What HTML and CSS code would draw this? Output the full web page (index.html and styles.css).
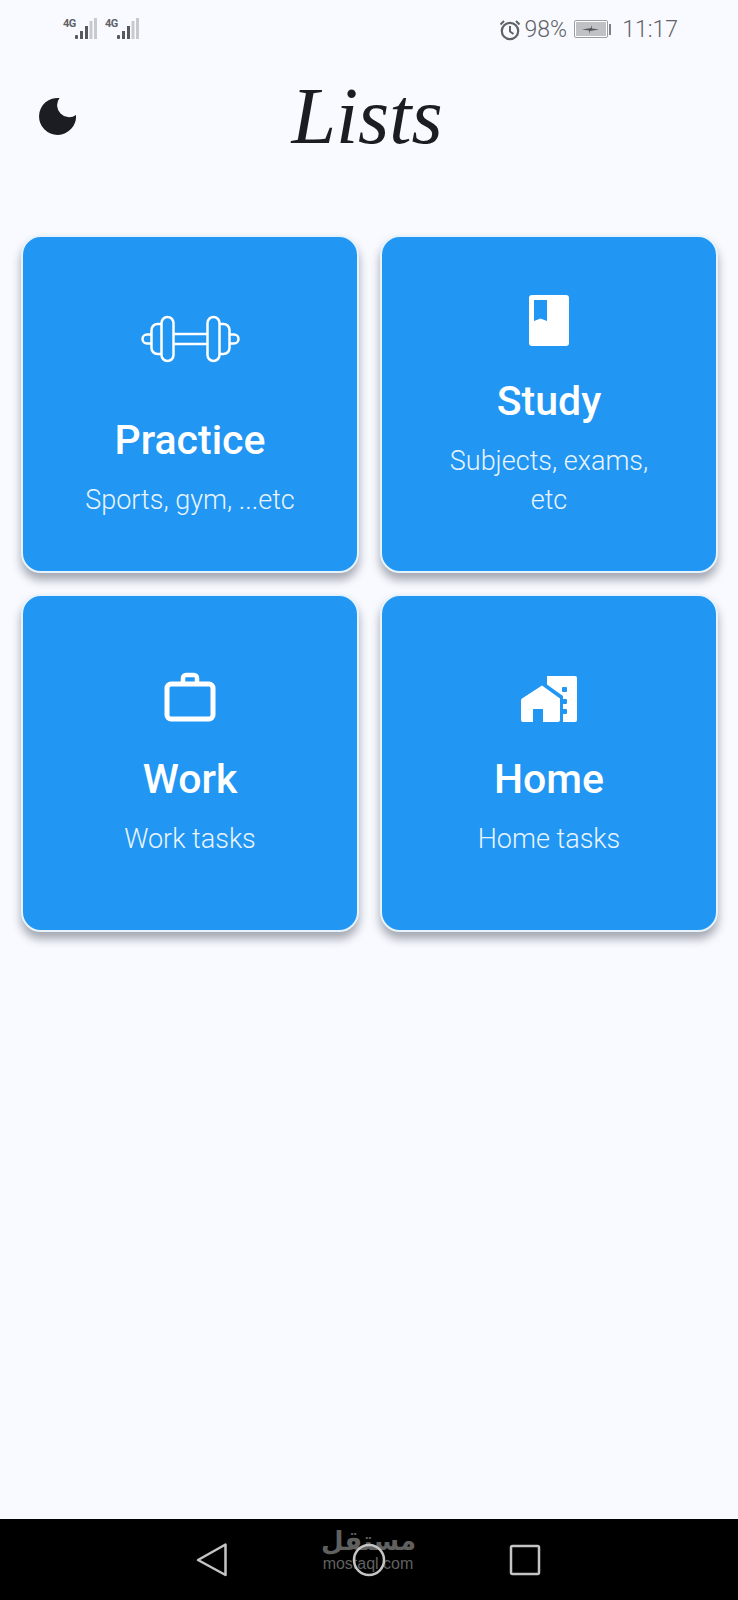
FILE: index.html
```html
<!DOCTYPE html>
<html>
<head>
<meta charset="utf-8">
<title>Lists</title>
<link rel="stylesheet" href="styles.css">
</head>
<body>
<div class="screen">

	<div class="statusBar">
		<div class="signals">
			<div class="sim">
				<span class="simLabel">4G</span>
				<svg class="bars" width="22" height="22" viewBox="0 0 22 22">
					<rect x="0" y="17" width="3" height="4" rx="1" fill="#55585c"/>
					<rect x="5" y="13" width="3" height="8" fill="#55585c"/>
					<rect x="10" y="8" width="3" height="13" fill="#55585c"/>
					<rect x="14.5" y="3" width="3" height="18" fill="#c6c9ce"/>
					<rect x="19" y="0" width="3" height="21" fill="#c6c9ce"/>
				</svg>
			</div>
			<div class="sim">
				<span class="simLabel">4G</span>
				<svg class="bars" width="22" height="22" viewBox="0 0 22 22">
					<rect x="0" y="17" width="3" height="4" rx="1" fill="#55585c"/>
					<rect x="5" y="13" width="3" height="8" fill="#55585c"/>
					<rect x="10" y="8" width="3" height="13" fill="#55585c"/>
					<rect x="14.5" y="3" width="3" height="18" fill="#c6c9ce"/>
					<rect x="19" y="0" width="3" height="21" fill="#c6c9ce"/>
				</svg>
			</div>
		</div>
		<div class="statusRight">
			<svg width="22" height="22" viewBox="0 0 22 22" fill="none" stroke="#5f6266">
				<circle cx="11" cy="12" r="8.2" stroke-width="2.2"/>
				<path d="M11 7v5.5l3.5 2.5" stroke-width="2"/>
				<path d="M1.5 5.5L5 2M20.5 5.5L17 2" stroke-width="2"/>
			</svg>
			<span class="percent">98%</span>
			<svg class="battery" width="37" height="20" viewBox="0 0 37 20">
				<rect x="0.5" y="0.5" width="33" height="17" rx="1.5" fill="#fff" stroke="#9a9da1"/>
				<rect x="2" y="2" width="30" height="14" fill="#bfc1c5"/>
				<path d="M8 9.5l9-1.500 1-3 0 3.500 7 1-9 1.500-1 3 0-3.500z" fill="#55585c"/>
				<rect x="35" y="4" width="2" height="11" fill="#7d8084"/>
			</svg>
			<span class="clock">11:17</span>
		</div>
	</div>

	<div class="header">
		<svg class="moon" width="38" height="38" viewBox="0 0 38 38">
			<path d="M20.500 1A18.500 18.500 0 1 0 37 18A12 12 0 0 1 20.500 1z" fill="#1b1d22"/>
		</svg>
		<h1 class="pageTitle">Lists</h1>
	</div>

	<div class="cardGrid">
		<div class="card">
			<svg class="cardIcon" width="100" height="96" viewBox="0 0 100 96" fill="none" stroke="#fff" stroke-width="2.500">
				<rect x="21.500" y="27" width="12" height="44" rx="6"/>
				<rect x="67.500" y="27" width="12" height="44" rx="6"/>
				<path d="M21.500 34h-4a6 6 0 0 0-6 6v18a6 6 0 0 0 6 6h4"/>
				<path d="M79.500 34h4a6 6 0 0 1 6 6v18a6 6 0 0 1-6 6h-4"/>
				<path d="M11.500 44.500h-4.500a4.500 4.500 0 0 0 0 9h4.500"/>
				<path d="M89.500 44.500h4.500a4.500 4.500 0 0 1 0 9h-4.500"/>
				<path d="M33.500 44h34M33.500 54h34"/>
			</svg>
			<div class="cardTitle">Practice</div>
			<div class="cardText">Sports, gym, ...etc</div>
		</div>
		<div class="card">
			<svg class="cardIcon" width="42" height="56" viewBox="0 0 42 56">
				<path fill-rule="evenodd" fill="#fff" d="M4 4h34a3 3 0 0 1 3 3v45a3 3 0 0 1-3 3H4a3 3 0 0 1-3-3V7a3 3 0 0 1 3-3zM6 9v21l6.500-2.500 6.500 2.500V9z"/>
			</svg>
			<div class="cardTitle">Study</div>
			<div class="cardText">Subjects, exams, etc</div>
		</div>
		<div class="card">
			<svg class="cardIcon" width="52" height="56" viewBox="0 0 52 56" fill="none" stroke="#fff" stroke-width="5">
				<rect x="3" y="15" width="46" height="35" rx="4"/>
				<path d="M19 15V9a3 3 0 0 1 3-3h8a3 3 0 0 1 3 3v6" stroke-width="4.500"/>
			</svg>
			<div class="cardTitle">Work</div>
			<div class="cardText">Work tasks</div>
		</div>
		<div class="card">
			<svg class="cardIcon" width="58" height="56" viewBox="0 0 58 56">
				<path fill="#fff" d="M27 7h28a2 2 0 0 1 2 2v42a2 2 0 0 1-2 2H27z"/>
				<rect x="42" y="18" width="5" height="5" rx="1" fill="#2196f3"/>
				<rect x="42" y="30" width="5" height="5" rx="1" fill="#2196f3"/>
				<rect x="42" y="40" width="5" height="5" rx="1" fill="#2196f3"/>
				<path fill="#2196f3" d="M22 12L43 27V56H20V12z"/>
				<path fill="#fff" d="M22 16.500L40 29.500V51a2 2 0 0 1-2 2H3a2 2 0 0 1-2-2V32a3 3 0 0 1 1-2.500z"/>
				<path fill="#2196f3" d="M13 53V40h10v13z"/>
			</svg>
			<div class="cardTitle">Home</div>
			<div class="cardText">Home tasks</div>
		</div>
	</div>

	<div class="navBar">
		<div class="watermark">
			<div class="watermarkAr">مستقل</div>
			<div class="watermarkEn">mostaql.com</div>
		</div>
		<svg class="navIcon" width="32" height="36" viewBox="0 0 32 36" fill="none" stroke="#c4c4c4" stroke-width="2.500" stroke-linejoin="round">
			<path d="M29.500 2.500V33L2 18z"/>
		</svg>
		<svg class="navIcon" width="34" height="34" viewBox="0 0 34 34" fill="none" stroke="#c4c4c4" stroke-width="2.500">
			<circle cx="17" cy="17" r="15"/>
		</svg>
		<svg class="navIcon" width="32" height="32" viewBox="0 0 32 32" fill="none" stroke="#c4c4c4" stroke-width="2.500" stroke-linejoin="round">
			<rect x="2" y="2" width="28" height="28" rx="1.500"/>
		</svg>
	</div>

</div>
</body>
</html>
```

FILE: styles.css
```css
* {
	box-sizing: border-box;
}
html, body {
	margin: 0;
	padding: 0;
}
body {
	font-family: Roboto, "Liberation Sans", sans-serif;
	background-color: #f8faff;
}
.screen {
	width: 738px;
	height: 1600px;
	display: flex;
	flex-direction: column;
	overflow: hidden;
}

/* status bar */
.statusBar {
	height: 56px;
	padding: 18px 60px 0 63px;
	display: flex;
	justify-content: space-between;
	align-items: flex-start;
}
.signals {
	display: flex;
	gap: 8px;
}
.sim {
	display: flex;
	align-items: flex-start;
}
.simLabel {
	font-size: 11px;
	line-height: 12px;
	font-weight: 700;
	color: #5f6266;
	width: 12px;
	letter-spacing: -0.5px;
}
.statusRight {
	display: flex;
	align-items: center;
	color: #5f6266;
	font-size: 23px;
	line-height: 24px;
}
.percent {
	margin-left: 4px;
	font-weight: 300;
}
.battery {
	margin-left: 7px;
}
.clock {
	margin-left: 11px;
	font-weight: 300;
}

/* header */
.header {
	height: 179px;
	padding: 41px 0 0 39px;
	display: flex;
	align-items: flex-start;
}
.moon {
	flex-shrink: 0;
}
.pageTitle {
	margin: -26px 0 0 -38px;
	padding-right: 43px;
	flex: 1;
	text-align: center;
	font-family: "Liberation Serif", serif;
	font-style: italic;
	font-weight: 400;
	font-size: 80px;
	line-height: 90px;
	color: #1b1d22;
}

/* cards */
.cardGrid {
	padding: 0 21px;
	display: grid;
	grid-template-columns: 338px 338px;
	grid-auto-rows: 338px;
	gap: 21px;
}
.card {
	background-color: #2196f3;
	border: 2px solid #e6f3fd;
	border-radius: 20px;
	box-shadow: 0 7px 10px rgba(40, 45, 60, 0.4);
	padding: 2px 54px 0;
	display: flex;
	flex-direction: column;
	align-items: center;
	justify-content: center;
	text-align: center;
	color: #fff;
}
.cardIcon {
	display: block;
	margin-bottom: 32px;
	flex-shrink: 0;
}
.cardTitle {
	font-size: 41px;
	line-height: 45px;
	font-weight: 500;
	margin-bottom: 18px;
}
.cardText {
	font-size: 27px;
	line-height: 39px;
	font-weight: 300;
	color: #e8f4fe;
}

/* android nav bar */
.navBar {
	margin-top: auto;
	height: 81px;
	background-color: #000;
	padding: 0 197px 0 196px;
	position: relative;
	display: flex;
	justify-content: space-between;
	align-items: center;
}
.navIcon {
	position: relative;
	display: block;
}
.watermark {
	position: absolute;
	left: 321px;
	top: 6px;
	width: 94px;
	text-align: center;
	color: #606060;
}
.watermarkAr {
	font-family: "DejaVu Sans", sans-serif;
	font-weight: 700;
	font-size: 26px;
	line-height: 32px;
}
.watermarkEn {
	font-family: "Liberation Sans", sans-serif;
	font-size: 16px;
	line-height: 14px;
}
```
